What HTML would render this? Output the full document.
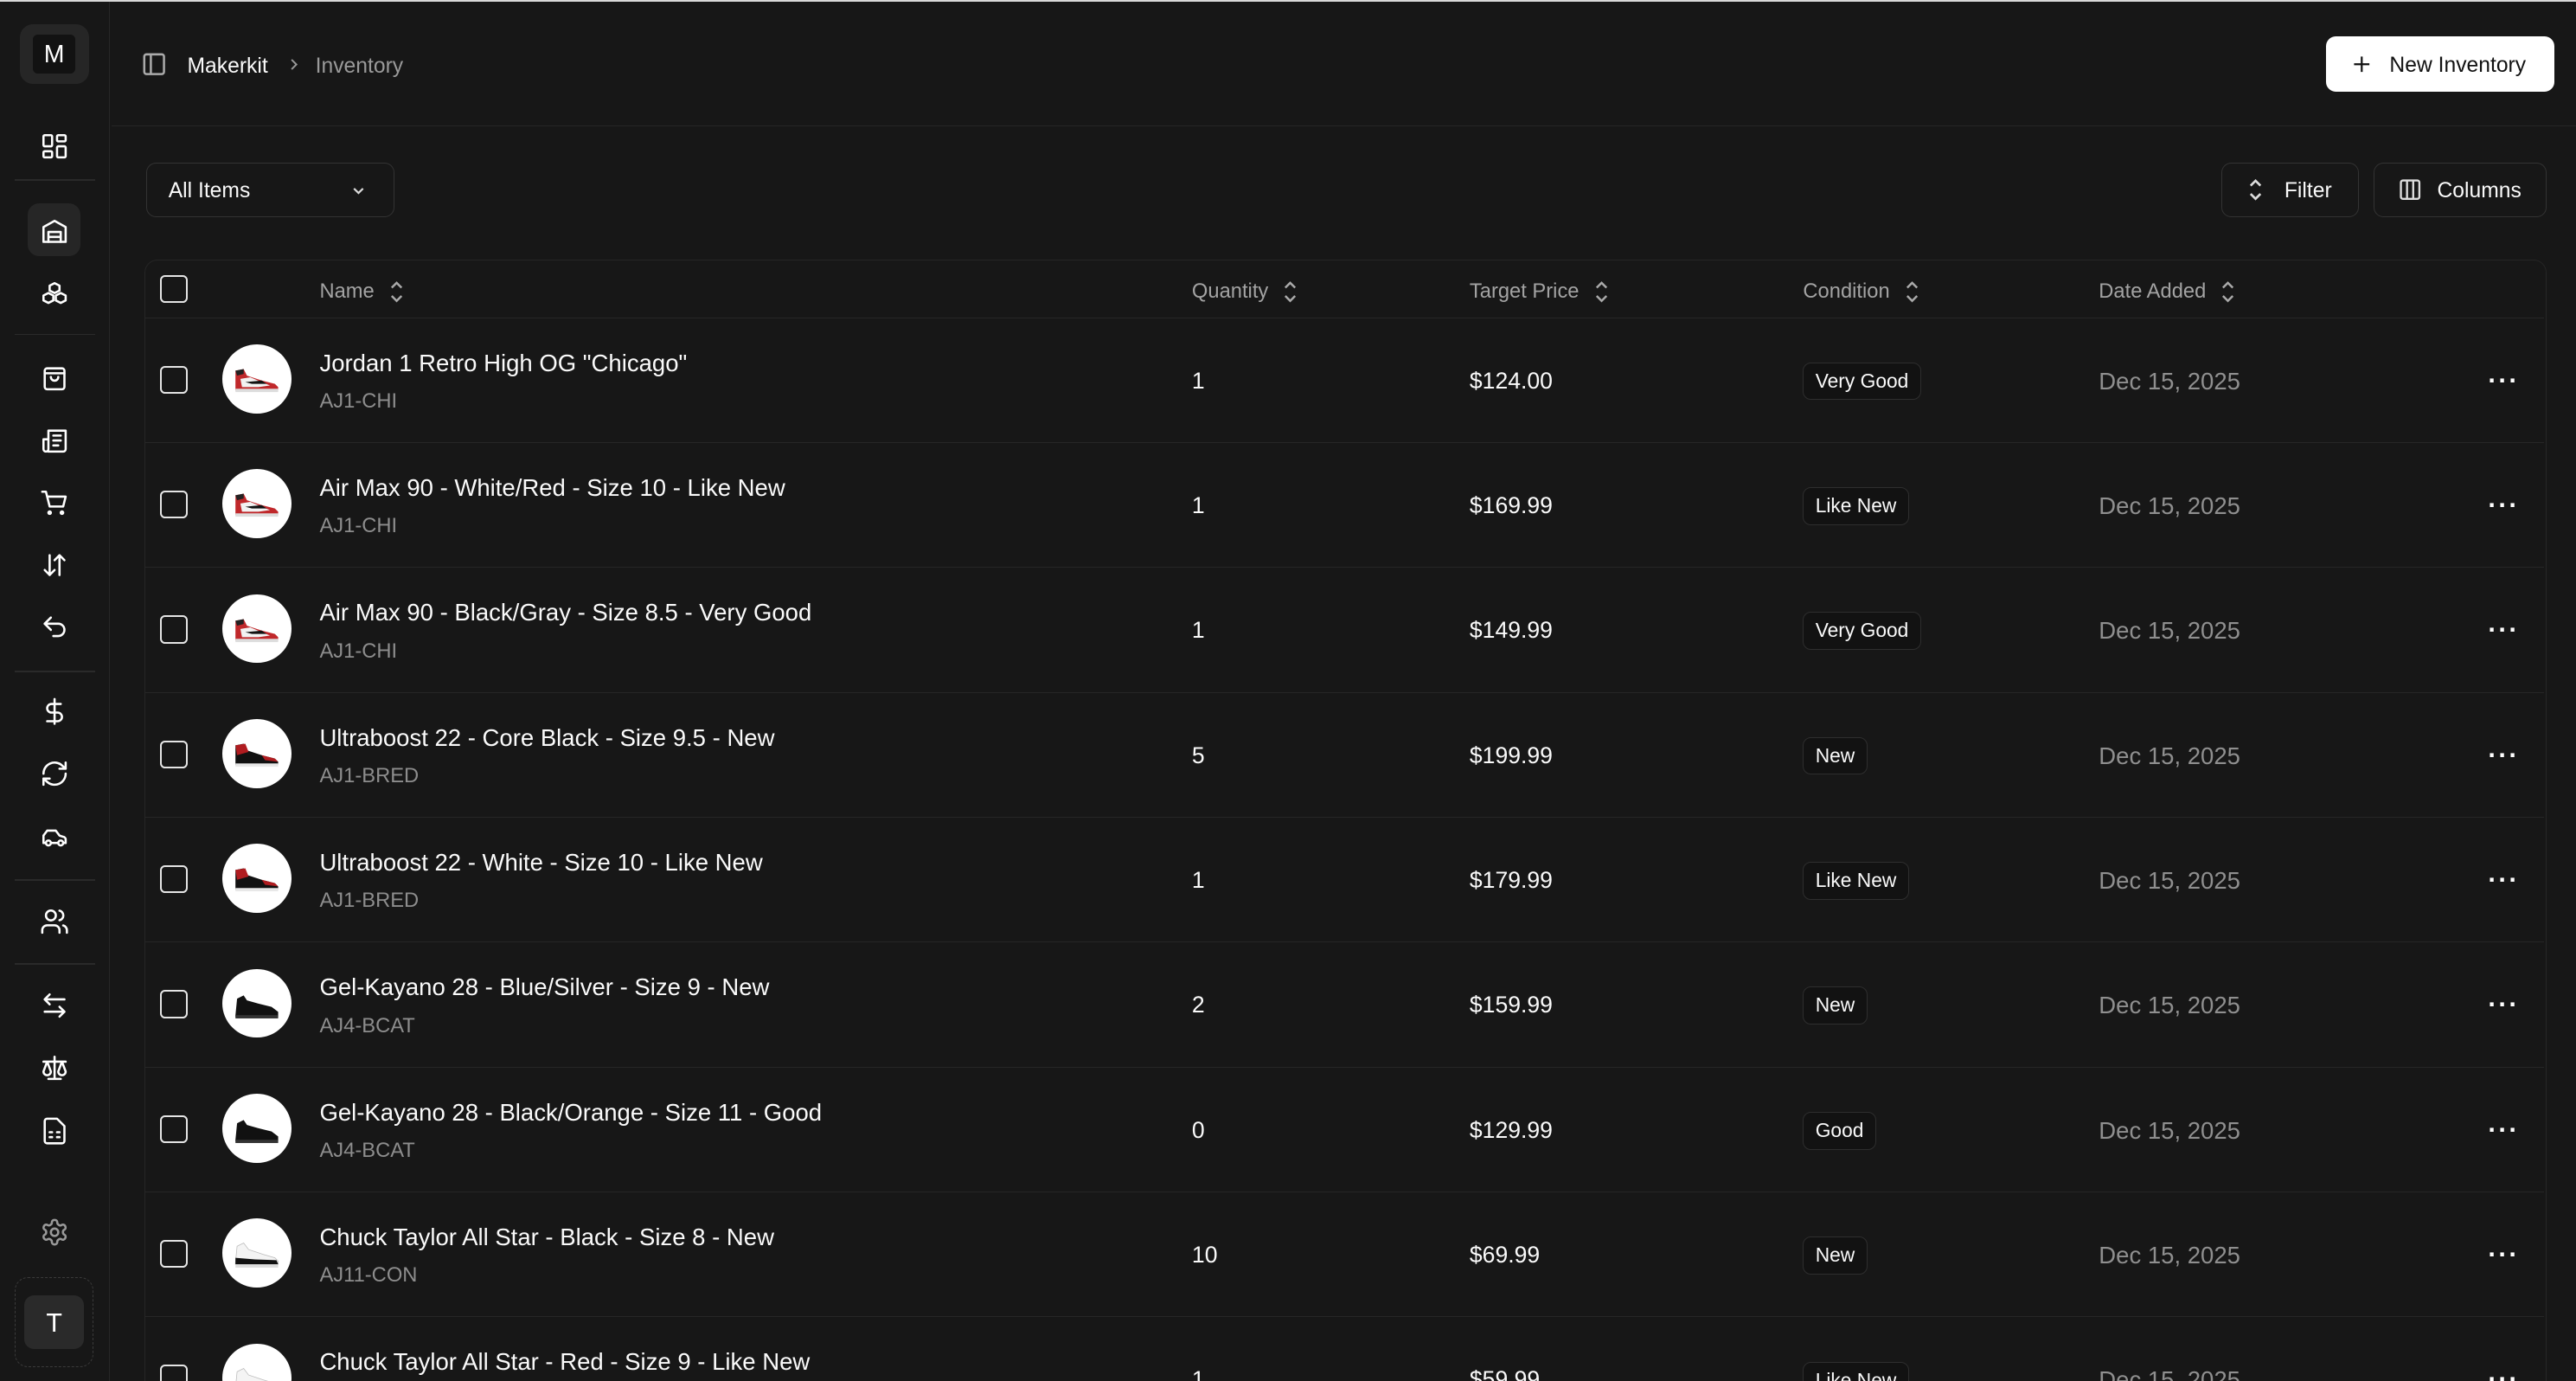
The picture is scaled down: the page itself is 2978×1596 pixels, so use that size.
<!DOCTYPE html>
<html><head><meta charset="utf-8"><style>
*{box-sizing:border-box;margin:0;padding:0}
html,body{width:2978px;height:1596px;overflow:hidden;background:#171717}
#w{zoom:1.8992;width:1568px;height:840.4px;position:relative;background:#171717;font-family:"Liberation Sans",sans-serif;color:#fafafa;overflow:hidden}
.topline{position:absolute;left:0;top:0;width:1568px;height:1px;background:#d8d8d8}
.sb{position:absolute;left:0;top:1px;width:67px;height:840px;border-right:1px solid #262626;background:#171717}
.ic{position:absolute;left:24px;width:18px;height:18px}
.ic svg{width:18px;height:18px;fill:none;stroke:#fff;stroke-width:1.8;stroke-linecap:round;stroke-linejoin:round;display:block}
.sep{position:absolute;left:9px;width:49px;height:1px;background:#2a2a2a}
.hdr{position:absolute;left:68px;top:1px;right:0;height:76px;border-bottom:1px solid #262626}
.abs{position:absolute}
.btn{position:absolute;border:1px solid #333;border-radius:6px;font-size:13px;display:flex;align-items:center;padding-top:2px}
.tbl{position:absolute;left:88px;top:158px;width:1462px;height:700px;border:1px solid #262626;border-radius:8px}
.row{position:absolute;left:0;width:1460px;border-bottom:1px solid #262626}
.cb{position:absolute;left:9px;width:17px;height:17px;border:1.5px solid #e5e5e5;border-radius:3px}
.av{position:absolute;left:47px;width:42px;height:42px;border-radius:50%;background:#fff;overflow:hidden}
.nm{position:absolute;left:106px;font-size:14.5px;color:#fafafa;white-space:nowrap}
.sku{position:absolute;left:106px;font-size:12.5px;color:#8d8d8d}
.cell{position:absolute;font-size:14px;color:#fafafa}
.bd{position:absolute;left:1009px;height:23px;padding:0 7px;border:1px solid #2e2e2e;border-radius:5px;background:#121212;font-size:12px;line-height:22px;color:#fafafa}
.dt{position:absolute;left:1189px;font-size:14.5px;color:#8f8f8f}
.dots{position:absolute;left:1426px;font-size:16px;color:#fff;letter-spacing:1px;font-weight:bold}
.th{position:absolute;top:12px;font-size:12.5px;color:#a3a3a3;display:flex;align-items:center;gap:9px}
.sort{width:9px;height:14px}
</style></head><body><div id="w">
<svg width="0" height="0" style="position:absolute">
<defs>
<symbol id="chi" viewBox="0 0 42 42"><path d="M8 27 L8 16 L13 15 L15 19 L24 22 L32 24 L34 26 L34 28 L8 28Z" fill="#c0282b"/><path d="M11 21 L17 20 L24 23 L29 25 L22 26 L12 26Z" fill="#f2f2f2"/><path d="M14 23 L24 22 L27 24 L18 24Z" fill="#111"/><rect x="8" y="27" width="26" height="2" fill="#ddd"/><path d="M8 16 L13 15 L13 18 L9 19Z" fill="#222"/></symbol>
<symbol id="bred" viewBox="0 0 42 42"><path d="M8 27 L8 16 L13 15 L15 19 L24 22 L32 24 L34 26 L34 28 L8 28Z" fill="#111"/><path d="M8 16 L14 15 L16 20 L9 22Z" fill="#b01c20"/><path d="M24 22 L32 24 L34 26 L26 25Z" fill="#b01c20"/><rect x="8" y="27" width="26" height="2" fill="#e8e8e8"/></symbol>
<symbol id="bcat" viewBox="0 0 42 42"><path d="M8 28 L9 18 L13 16 L15 19 L22 21 L30 23 L34 26 L34 29 L8 29Z" fill="#111"/><rect x="8" y="28" width="26" height="2" fill="#333"/></symbol>
<symbol id="con" viewBox="0 0 42 42"><path d="M8 27 L9 17 L13 15 L16 19 L25 22 L32 24 L34 26 L34 28 L8 28Z" fill="#f4f4f4" stroke="#bbb" stroke-width=".4"/><path d="M8 24 L20 25 L33 25.5 L34 28 L8 28Z" fill="#111"/><rect x="8" y="28" width="26" height="2" fill="#ddd"/></symbol>
</defs></svg>
<div class="topline"></div>
<div class="sb">
 <div class="abs" style="left:12px;top:14px;width:42px;height:36px;border-radius:8px;background:#262626"></div>
 <div class="abs" style="left:20px;top:20px;width:26px;height:24px;border-radius:3px;background:#121212;color:#fff;font-size:15px;text-align:center;line-height:25px">M</div>
 <div class="ic" style="top:79px"><svg viewBox="0 0 24 24"><rect x="3" y="3" width="7" height="9" rx="1"/><rect x="14" y="3" width="7" height="5" rx="1"/><rect x="14" y="12" width="7" height="9" rx="1"/><rect x="3" y="16" width="7" height="5" rx="1"/></svg></div>
 <div class="sep" style="top:108px"></div>
 <div class="abs" style="left:17px;top:123px;width:32px;height:32px;border-radius:7px;background:#262626"></div>
 <div class="ic" style="top:131px"><svg viewBox="0 0 24 24"><path d="M3 20V8l9-5 9 5v12z"/><path d="M7 20v-8h10v8M7 16h10"/></svg></div>
 <div class="ic" style="top:169px"><svg viewBox="0 0 24 24"><path d="M12 3l4 2v4l-4 2-4-2V5z"/><path d="M7 11l4 2v4l-4 2-4-2v-4zM17 11l4 2v4l-4 2-4-2v-4z"/></svg></div>
 <div class="sep" style="top:202px"></div>
 <div class="ic" style="top:220px"><svg viewBox="0 0 24 24"><rect x="4" y="4" width="16" height="17" rx="2"/><path d="M4 8h16M9 11a3 3 0 0 0 6 0"/></svg></div>
 <div class="ic" style="top:258px"><svg viewBox="0 0 24 24"><path d="M7 21h12a2 2 0 0 0 2-2V4H7v15a2 2 0 0 1-4 0v-8h4"/><path d="M11 8h6M11 12h6M11 16h4"/></svg></div>
 <div class="ic" style="top:296px"><svg viewBox="0 0 24 24"><circle cx="8" cy="20" r="1"/><circle cx="18" cy="20" r="1"/><path d="M2 3h3l3 12h11l2-8H6"/></svg></div>
 <div class="ic" style="top:334px"><svg viewBox="0 0 24 24"><path d="M8 4v16M4 16l4 4 4-4M16 20V4M12 8l4-4 4 4"/></svg></div>
 <div class="ic" style="top:372px"><svg viewBox="0 0 24 24"><path d="M9 14L4 9l5-5"/><path d="M4 9h11a5 5 0 0 1 0 10h-4"/></svg></div>
 <div class="sep" style="top:407px"></div>
 <div class="ic" style="top:423px"><svg viewBox="0 0 24 24"><path d="M12 2v20M17 6H9.5a3.5 3.5 0 0 0 0 7h5a3.5 3.5 0 0 1 0 7H6"/></svg></div>
 <div class="ic" style="top:461px"><svg viewBox="0 0 24 24"><path d="M3 12a9 9 0 0 1 15-6.7L21 8M21 3v5h-5M21 12a9 9 0 0 1-15 6.7L3 16M8 16H3v5"/></svg></div>
 <div class="ic" style="top:499px"><svg viewBox="0 0 24 24"><path d="M19 17h2v-3c0-1-1-2-2-2l-3-1-3-4H6L3 11v6h2"/><circle cx="7" cy="17" r="2"/><circle cx="17" cy="17" r="2"/><path d="M9 17h6"/></svg></div>
 <div class="sep" style="top:534px"></div>
 <div class="ic" style="top:551px"><svg viewBox="0 0 24 24"><circle cx="9" cy="7" r="4"/><path d="M2 21v-2a4 4 0 0 1 4-4h6a4 4 0 0 1 4 4v2M16 3.1a4 4 0 0 1 0 7.8M22 21v-2a4 4 0 0 0-3-3.9"/></svg></div>
 <div class="sep" style="top:585px"></div>
 <div class="ic" style="top:602px"><svg viewBox="0 0 24 24"><path d="M8 3L4 7l4 4M4 7h16M16 21l4-4-4-4M20 17H4"/></svg></div>
 <div class="ic" style="top:640px"><svg viewBox="0 0 24 24"><path d="M12 3v18M7 21h10M3 7h18M6 7l-3 8a3 3 0 0 0 6 0zM18 7l-3 8a3 3 0 0 0 6 0z"/></svg></div>
 <div class="ic" style="top:678px"><svg viewBox="0 0 24 24"><path d="M14 2H6a2 2 0 0 0-2 2v16a2 2 0 0 0 2 2h12a2 2 0 0 0 2-2V8z"/><path d="M8 13h2M14 13h2M8 17h2M14 17h2"/></svg></div>
 <div class="ic" style="top:740px"><svg viewBox="0 0 24 24" style="stroke:#999"><circle cx="12" cy="12" r="3"/><path d="M12.2 2h-.4a2 2 0 0 0-2 2v.2a2 2 0 0 1-1 1.7l-.4.3a2 2 0 0 1-2 0l-.2-.1a2 2 0 0 0-2.7.7l-.2.4a2 2 0 0 0 .7 2.7l.2.1a2 2 0 0 1 1 1.7v.5a2 2 0 0 1-1 1.7l-.2.1a2 2 0 0 0-.7 2.7l.2.4a2 2 0 0 0 2.7.7l.2-.1a2 2 0 0 1 2 0l.4.3a2 2 0 0 1 1 1.7v.2a2 2 0 0 0 2 2h.4a2 2 0 0 0 2-2v-.2a2 2 0 0 1 1-1.7l.4-.3a2 2 0 0 1 2 0l.2.1a2 2 0 0 0 2.7-.7l.2-.4a2 2 0 0 0-.7-2.7l-.2-.1a2 2 0 0 1-1-1.7v-.5a2 2 0 0 1 1-1.7l.2-.1a2 2 0 0 0 .7-2.7l-.2-.4a2 2 0 0 0-2.7-.7l-.2.1a2 2 0 0 1-2 0l-.4-.3a2 2 0 0 1-1-1.7V4a2 2 0 0 0-2-2z"/></svg></div>
 <div class="abs" style="left:9px;top:776px;width:48px;height:55px;border:1px dashed #3a3a3a;border-radius:8px"></div>
 <div class="abs" style="left:15px;top:787px;width:36px;height:33px;border-radius:6px;background:#2a2a2a;color:#fff;font-size:16px;text-align:center;line-height:34px">T</div>
</div>
<div class="hdr">
 <svg class="abs" style="left:18px;top:30px" width="16" height="16" viewBox="0 0 24 24" fill="none" stroke="#aaa" stroke-width="2"><rect x="3" y="3" width="18" height="18" rx="2"/><path d="M9 3v18"/></svg>
 <div class="abs" style="left:46px;top:32px;font-size:13px;color:#fafafa">Makerkit</div>
 <svg class="abs" style="left:106px;top:33px" width="10" height="10" viewBox="0 0 24 24" fill="none" stroke="#999" stroke-width="2.5"><path d="M9 5l7 7-7 7"/></svg>
 <div class="abs" style="left:124px;top:32px;font-size:13px;color:#9a9a9a">Inventory</div>
</div>
<div class="btn" style="left:1416px;top:22px;width:139px;height:34px;background:#fff;border-color:#fff;color:#111;padding-left:14px">
 <svg width="14" height="14" viewBox="0 0 24 24" fill="none" stroke="#111" stroke-width="2" style="margin-top:-2px"><path d="M12 4v16M4 12h16"/></svg><span style="margin-left:10px">New Inventory</span></div>
<div class="btn" style="left:89px;top:99px;width:151px;height:33px;padding-left:13px">All Items
 <svg style="position:absolute;left:123px;top:11px" width="11" height="11" viewBox="0 0 24 24" fill="none" stroke="#ddd" stroke-width="2.5"><path d="M6 9l6 6 6-6"/></svg></div>
<div class="btn" style="left:1352px;top:99px;width:84px;height:33px;padding-left:16px">
 <svg width="9" height="14" viewBox="0 0 9 14" fill="none" stroke="#ddd" stroke-width="1.4" style="margin-top:-2px"><path d="M1.5 4.5L4.5 1.5 7.5 4.5M1.5 9.5L4.5 12.5 7.5 9.5"/></svg><span style="margin-left:13px">Filter</span></div>
<div class="btn" style="left:1445px;top:99px;width:105px;height:33px;padding-left:14px">
 <svg width="15" height="16" viewBox="0 0 24 24" fill="none" stroke="#ddd" stroke-width="2" style="margin-top:-2px"><rect x="3" y="3" width="18" height="18" rx="2"/><path d="M9 3v18M15 3v18"/></svg><span style="margin-left:9px">Columns</span></div>
<div class="tbl">
 <div class="row" style="top:0;height:35px">
  <div class="cb" style="top:9px"></div>
  <div class="th" style="left:106px">Name<svg class="sort" viewBox="0 0 9 14" fill="none" stroke="#aaa" stroke-width="1.3"><path d="M1.5 4.5L4.5 1.5 7.5 4.5M1.5 9.5L4.5 12.5 7.5 9.5"/></svg></div>
  <div class="th" style="left:637px">Quantity<svg class="sort" viewBox="0 0 9 14" fill="none" stroke="#aaa" stroke-width="1.3"><path d="M1.5 4.5L4.5 1.5 7.5 4.5M1.5 9.5L4.5 12.5 7.5 9.5"/></svg></div>
  <div class="th" style="left:806px">Target Price<svg class="sort" viewBox="0 0 9 14" fill="none" stroke="#aaa" stroke-width="1.3"><path d="M1.5 4.5L4.5 1.5 7.5 4.5M1.5 9.5L4.5 12.5 7.5 9.5"/></svg></div>
  <div class="th" style="left:1009px">Condition<svg class="sort" viewBox="0 0 9 14" fill="none" stroke="#aaa" stroke-width="1.3"><path d="M1.5 4.5L4.5 1.5 7.5 4.5M1.5 9.5L4.5 12.5 7.5 9.5"/></svg></div>
  <div class="th" style="left:1189px">Date Added<svg class="sort" viewBox="0 0 9 14" fill="none" stroke="#aaa" stroke-width="1.3"><path d="M1.5 4.5L4.5 1.5 7.5 4.5M1.5 9.5L4.5 12.5 7.5 9.5"/></svg></div>
 </div>

 <div class="row" style="top:35px;height:76px"><div class="cb" style="top:29px"></div><div class="av" style="top:16px"><svg width="42" height="42"><use href="#chi"/></svg></div><div class="nm" style="top:19px">Jordan 1 Retro High OG "Chicago"</div><div class="sku" style="top:44px">AJ1-CHI</div><div class="cell" style="left:637px;top:30px">1</div><div class="cell" style="left:806px;top:30px">$124.00</div><div class="bd" style="top:27px">Very Good</div><div class="dt" style="top:30px">Dec 15, 2025</div><div class="dots" style="top:29px">···</div></div>
 <div class="row" style="top:111px;height:76px"><div class="cb" style="top:29px"></div><div class="av" style="top:16px"><svg width="42" height="42"><use href="#chi"/></svg></div><div class="nm" style="top:19px">Air Max 90 - White/Red - Size 10 - Like New</div><div class="sku" style="top:44px">AJ1-CHI</div><div class="cell" style="left:637px;top:30px">1</div><div class="cell" style="left:806px;top:30px">$169.99</div><div class="bd" style="top:27px">Like New</div><div class="dt" style="top:30px">Dec 15, 2025</div><div class="dots" style="top:29px">···</div></div>
 <div class="row" style="top:187px;height:76px"><div class="cb" style="top:29px"></div><div class="av" style="top:16px"><svg width="42" height="42"><use href="#chi"/></svg></div><div class="nm" style="top:19px">Air Max 90 - Black/Gray - Size 8.5 - Very Good</div><div class="sku" style="top:44px">AJ1-CHI</div><div class="cell" style="left:637px;top:30px">1</div><div class="cell" style="left:806px;top:30px">$149.99</div><div class="bd" style="top:27px">Very Good</div><div class="dt" style="top:30px">Dec 15, 2025</div><div class="dots" style="top:29px">···</div></div>
 <div class="row" style="top:263px;height:76px"><div class="cb" style="top:29px"></div><div class="av" style="top:16px"><svg width="42" height="42"><use href="#bred"/></svg></div><div class="nm" style="top:19px">Ultraboost 22 - Core Black - Size 9.5 - New</div><div class="sku" style="top:44px">AJ1-BRED</div><div class="cell" style="left:637px;top:30px">5</div><div class="cell" style="left:806px;top:30px">$199.99</div><div class="bd" style="top:27px">New</div><div class="dt" style="top:30px">Dec 15, 2025</div><div class="dots" style="top:29px">···</div></div>
 <div class="row" style="top:339px;height:76px"><div class="cb" style="top:29px"></div><div class="av" style="top:16px"><svg width="42" height="42"><use href="#bred"/></svg></div><div class="nm" style="top:19px">Ultraboost 22 - White - Size 10 - Like New</div><div class="sku" style="top:44px">AJ1-BRED</div><div class="cell" style="left:637px;top:30px">1</div><div class="cell" style="left:806px;top:30px">$179.99</div><div class="bd" style="top:27px">Like New</div><div class="dt" style="top:30px">Dec 15, 2025</div><div class="dots" style="top:29px">···</div></div>
 <div class="row" style="top:415px;height:76px"><div class="cb" style="top:29px"></div><div class="av" style="top:16px"><svg width="42" height="42"><use href="#bcat"/></svg></div><div class="nm" style="top:19px">Gel-Kayano 28 - Blue/Silver - Size 9 - New</div><div class="sku" style="top:44px">AJ4-BCAT</div><div class="cell" style="left:637px;top:30px">2</div><div class="cell" style="left:806px;top:30px">$159.99</div><div class="bd" style="top:27px">New</div><div class="dt" style="top:30px">Dec 15, 2025</div><div class="dots" style="top:29px">···</div></div>
 <div class="row" style="top:491px;height:76px"><div class="cb" style="top:29px"></div><div class="av" style="top:16px"><svg width="42" height="42"><use href="#bcat"/></svg></div><div class="nm" style="top:19px">Gel-Kayano 28 - Black/Orange - Size 11 - Good</div><div class="sku" style="top:44px">AJ4-BCAT</div><div class="cell" style="left:637px;top:30px">0</div><div class="cell" style="left:806px;top:30px">$129.99</div><div class="bd" style="top:27px">Good</div><div class="dt" style="top:30px">Dec 15, 2025</div><div class="dots" style="top:29px">···</div></div>
 <div class="row" style="top:567px;height:76px"><div class="cb" style="top:29px"></div><div class="av" style="top:16px"><svg width="42" height="42"><use href="#con"/></svg></div><div class="nm" style="top:19px">Chuck Taylor All Star - Black - Size 8 - New</div><div class="sku" style="top:44px">AJ11-CON</div><div class="cell" style="left:637px;top:30px">10</div><div class="cell" style="left:806px;top:30px">$69.99</div><div class="bd" style="top:27px">New</div><div class="dt" style="top:30px">Dec 15, 2025</div><div class="dots" style="top:29px">···</div></div>
 <div class="row" style="top:643px;height:76px;border-bottom:none"><div class="cb" style="top:29px"></div><div class="av" style="top:16px"><svg width="42" height="42"><use href="#con"/></svg></div><div class="nm" style="top:19px">Chuck Taylor All Star - Red - Size 9 - Like New</div><div class="sku" style="top:44px">AJ11-CON</div><div class="cell" style="left:637px;top:30px">1</div><div class="cell" style="left:806px;top:30px">$59.99</div><div class="bd" style="top:27px">Like New</div><div class="dt" style="top:30px">Dec 15, 2025</div><div class="dots" style="top:29px">···</div></div>
</div>
</div></body></html>
